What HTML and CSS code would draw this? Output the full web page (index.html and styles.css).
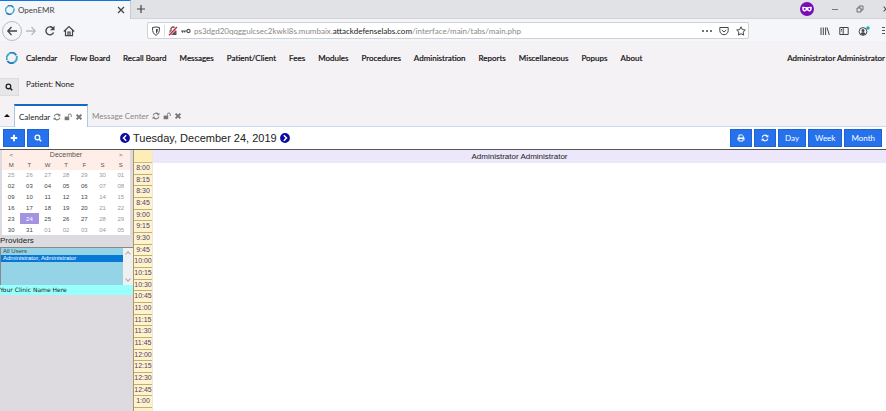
FILE: index.html
```html
<!DOCTYPE html>
<html lang="en">
<head>
<meta charset="utf-8">
<title>OpenEMR</title>
<link rel="stylesheet" href="styles.css">
</head>
<body>
<svg class="defs" aria-hidden="true">
  <symbol id="logo" viewBox="1 .7 10.500 10.500"><g fill="none" stroke-width="1.600"><path d="M2 7.800A4.400 4.400 0 0 1 4 2.100" stroke="#36add2"/><path d="M4 1.800C6 .8 8.500 1.500 10 3.500" stroke="#2784bd"/><path d="M10.300 4.200C11 7 9.500 9 7.800 10" stroke="#36add2"/><path d="M7.800 10C5.500 11 3.500 10.300 2.200 8.600" stroke="#2878b5"/></g></symbol>
  <symbol id="close" viewBox="0 0 10 10"><path d="M2 2l6 6M8 2l-6 6" fill="none" stroke="currentColor" stroke-width="1.300"/></symbol>
  <symbol id="times" viewBox="0 0 10 10"><path d="M2 2l6 6M8 2l-6 6" fill="none" stroke="currentColor" stroke-width="2.500"/></symbol>
  <symbol id="plus" viewBox="0 0 10 10"><path d="M5 1v8M1 5h8" fill="none" stroke="currentColor" stroke-width="1.200"/></symbol>
  <symbol id="plusbold" viewBox="0 0 10 10"><path d="M5 1v8M1 5h8" fill="none" stroke="currentColor" stroke-width="2.400"/></symbol>
  <symbol id="search" viewBox="0 0 10 10"><g fill="none" stroke="currentColor" stroke-width="1.600"><circle cx="4.300" cy="4.300" r="2.900"/><path d="M6.500 6.500L9 9" stroke-width="2"/></g></symbol>
  <symbol id="back" viewBox="0 0 12 12"><path d="M11 6H2M5.500 2L1.800 6l3.700 4" fill="none" stroke="currentColor" stroke-width="1.300"/></symbol>
  <symbol id="reload" viewBox="0 0 12 12"><path d="M9.600 7.500A4 4 0 1 1 8.800 3" fill="none" stroke="currentColor" stroke-width="1.400"/><path d="M10.500.8v4.400H6z" fill="currentColor"/></symbol>
  <symbol id="home" viewBox="0 0 12 12"><path d="M.8 6.500L6 1.500l5.200 5M2.500 5.500v5.200h7V5.500M5 10.500V7h2v3.500" fill="none" stroke="currentColor" stroke-width="1.200"/></symbol>
  <symbol id="shield" viewBox="0 0 10 10"><path d="M1.500 1.500Q5 .5 8.500 1.500C8.600 6 7.500 8 5 9.300C2.500 8 1.400 6 1.500 1.500z" fill="none" stroke="currentColor"/><path d="M5 3v4.500C6.500 6.500 6.800 5 6.800 3z" fill="currentColor"/></symbol>
  <symbol id="insecure" viewBox="0 0 10 10"><path d="M3 5V3a2 2 0 0 1 4 0v2" fill="none" stroke="#555" stroke-width="1.300"/><path d="M1.500 4.500h7V9h-7z" fill="#555"/><path d="M1 9.200L9 1" stroke="#fff" stroke-width="2.600"/><path d="M1 9.200L9 1" stroke="#d92345" stroke-width="1.500"/></symbol>
  <symbol id="key" viewBox="0 0 10 10"><path d="M0 5h6M1.500 5v1.800M3.500 5v1.500" fill="none" stroke="#555" stroke-width="1.200"/><circle cx="7.500" cy="5" r="1.600" fill="none" stroke="#555" stroke-width="1.200"/></symbol>
  <symbol id="pocket" viewBox="0 0 10 10"><path d="M.8 1.500h8.400v3a4.200 4.200 0 0 1-8.400 0zM2.800 4L5 6l2.200-2" fill="none" stroke="currentColor"/></symbol>
  <symbol id="star" viewBox="0 0 10 10"><path d="M5 .8l1.300 2.800 3 .4-2.200 2.100.6 3L5 7.700 2.300 9.100l.6-3L.7 4l3-.4z" fill="none" stroke="currentColor"/></symbol>
  <symbol id="library" viewBox="0 0 10 10"><path d="M1 1.500v7.500M3.300 1.500v7.500M5.600 1.500v7.500M7 1.500l2.300 7.500" fill="none" stroke="currentColor"/></symbol>
  <symbol id="sidebar" viewBox="0 0 10 10"><path d="M.8 1.500h8.400v7H.8zM4.200 1.500v7M2 3.500h1M2 5h1" fill="none" stroke="currentColor"/></symbol>
  <symbol id="account" viewBox="0 0 12 10"><circle cx="5" cy="5.500" r="3.900" fill="none" stroke="currentColor"/><circle cx="5" cy="4.500" r="1.500" fill="currentColor"/><path d="M2.500 8C3 5.800 7 5.800 7.500 8L5 9z" fill="currentColor"/><circle cx="10" cy="2" r="1.700" fill="#10a9ca"/></symbol>
  <symbol id="mask" viewBox="0 0 14 14"><circle cx="7" cy="7" r="7" fill="#7a0cb8"/><path d="M2.300 4.800C4 4.500 5.500 5.300 7 5.300s3-.8 4.700-.5c.3 3.500-.8 4.700-2.300 4.700S7.500 8.300 7 8.300s-.9 1.200-2.400 1.200-2.600-1.200-2.300-4.700z" fill="#fff"/><circle cx="4.700" cy="7" r="1" fill="#7a0cb8"/><circle cx="9.300" cy="7" r="1" fill="#7a0cb8"/></symbol>
  <symbol id="restore" viewBox="0 0 8 8"><path d="M1 3h4v4H1zM3 3V1h4v4H5" fill="none" stroke="currentColor" stroke-width=".8"/></symbol>
  <symbol id="refresh" viewBox="0 0 10 10"><path d="M1.500 4.300A3.500 3.500 0 0 1 7.800 3M8.500 5.700A3.500 3.500 0 0 1 2.200 7" fill="none" stroke="currentColor" stroke-width="1.400"/><path d="M9.200.8v3.400H5.800zM.8 9.200V5.800h3.400z" fill="currentColor"/></symbol>
  <symbol id="unlock" viewBox="0 0 10 10"><path d="M.8 4.500h5.700V9H.8z" fill="currentColor"/><path d="M5.500 4.500V3a1.800 1.800 0 0 1 3.600 0v2" fill="none" stroke="currentColor" stroke-width="1.200"/></symbol>
  <symbol id="print" viewBox="0 0 10 10"><path d="M2.500 5V1.200h4l1.200 1.200V5M2.500 6.500v2.300h5V6.500" fill="none" stroke="currentColor" stroke-width="1.200"/><path d="M.6 4.500h8.800v3.300H8V6.300H2v1.500H.6z" fill="currentColor"/></symbol>
  <symbol id="prev" viewBox="0 0 10 10"><circle cx="5" cy="5" r="4.900" fill="#0b0b9e"/><path d="M6.200 2.300L3.500 5l2.700 2.700" fill="none" stroke="#fff" stroke-width="1.500"/></symbol>
  <symbol id="next" viewBox="0 0 10 10"><circle cx="5" cy="5" r="4.900" fill="#0b0b9e"/><path d="M3.800 2.300L6.500 5 3.800 7.700" fill="none" stroke="#fff" stroke-width="1.500"/></symbol>
</svg>

<header class="browser">
  <div class="titlebar">
    <div class="page-tab"><svg class="i10"><use href="#logo"/></svg><span class="page-title">OpenEMR</span><button aria-label="Close tab"><svg class="i10"><use href="#close"/></svg></button></div>
    <button class="new-tab" aria-label="New tab"><svg class="i10"><use href="#plus"/></svg></button>
    <div class="window-buttons">
      <svg class="i14"><use href="#mask"/></svg>
      <button aria-label="Minimize"><span class="minimize"></span></button>
      <button aria-label="Restore"><svg class="i8"><use href="#restore"/></svg></button>
      <button aria-label="Close"><svg class="i8"><use href="#close"/></svg></button>
    </div>
  </div>
  <div class="navbar">
    <button class="back" aria-label="Back"><svg class="i12"><use href="#back"/></svg></button>
    <button class="forward" aria-label="Forward"><svg class="i12"><use href="#back"/></svg></button>
    <button aria-label="Reload"><svg class="i12"><use href="#reload"/></svg></button>
    <button aria-label="Home"><svg class="i12"><use href="#home"/></svg></button>
    <div class="address">
      <svg class="i10"><use href="#shield"/></svg><span class="divider"></span><svg class="i10"><use href="#insecure"/></svg><svg class="i10"><use href="#key"/></svg>
      <div class="url">ps3dgd20qqggulcsec2kwkl8s.mumbaix.<b>attackdefenselabs.com</b>/interface/main/tabs/main.php</div>
      <button class="dots" aria-label="Page actions"><i></i><i></i><i></i></button>
      <button aria-label="Save to Pocket"><svg class="i10"><use href="#pocket"/></svg></button>
      <button aria-label="Bookmark"><svg class="i10"><use href="#star"/></svg></button>
    </div>
    <div class="tools">
      <button aria-label="Library"><svg class="i10"><use href="#library"/></svg></button>
      <button aria-label="Sidebars"><svg class="i10"><use href="#sidebar"/></svg></button>
      <button aria-label="Account"><svg class="account"><use href="#account"/></svg></button>
      <button class="burger" aria-label="Menu"><i></i><i></i><i></i></button>
    </div>
  </div>
</header>

<nav class="menu">
  <svg class="i12 brand"><use href="#logo"/></svg>
  <a href="#">Calendar</a><a href="#">Flow Board</a><a href="#">Recall Board</a><a href="#">Messages</a><a href="#">Patient/Client</a><a href="#">Fees</a><a href="#">Modules</a><a href="#">Procedures</a><a href="#">Administration</a><a href="#">Reports</a><a href="#">Miscellaneous</a><a href="#">Popups</a><a href="#">About</a>
  <a href="#" class="user">Administrator Administrator</a>
</nav>

<section class="patient">
  <button class="find" aria-label="Find patient"><svg class="i8"><use href="#search"/></svg></button>
  <span>Patient: None</span>
</section>

<div class="tabs">
  <button class="collapse" aria-label="Collapse"><span class="caret"></span></button>
  <div class="tab active"><a href="#">Calendar</a><button aria-label="Refresh"><svg class="i8"><use href="#refresh"/></svg></button><button aria-label="Lock"><svg class="i8"><use href="#unlock"/></svg></button><button aria-label="Close"><svg class="i8"><use href="#times"/></svg></button></div>
  <div class="tab"><a href="#">Message Center</a><button aria-label="Refresh"><svg class="i8"><use href="#refresh"/></svg></button><button aria-label="Lock"><svg class="i8"><use href="#unlock"/></svg></button><button aria-label="Close"><svg class="i8"><use href="#times"/></svg></button></div>
</div>

<div class="toolbar">
  <div class="group left">
    <button class="btn" aria-label="Add"><svg class="i8"><use href="#plusbold"/></svg></button>
    <button class="btn" aria-label="Search"><svg class="i8"><use href="#search"/></svg></button>
  </div>
  <div class="date">
    <button aria-label="Previous day"><svg class="i10"><use href="#prev"/></svg></button>
    <h1>Tuesday, December 24, 2019</h1>
    <button aria-label="Next day"><svg class="i10"><use href="#next"/></svg></button>
  </div>
  <div class="group right">
    <button class="btn" aria-label="Print"><svg class="i8"><use href="#print"/></svg></button>
    <button class="btn" aria-label="Refresh"><svg class="i8"><use href="#refresh"/></svg></button>
    <button class="btn">Day</button><button class="btn">Week</button><button class="btn">Month</button>
  </div>
</div>

<main class="content">
  <aside class="side">
    <table class="month">
      <thead>
        <tr><th><a href="#">&lt;</a></th><th colspan="5" class="name">December</th><th><a href="#">&gt;</a></th></tr>
        <tr><th>M</th><th>T</th><th>W</th><th>T</th><th>F</th><th>S</th><th>S</th></tr>
      </thead>
      <tbody>
        <tr class="out"><td>25</td><td>26</td><td>27</td><td>28</td><td>29</td><td>30</td><td>01</td></tr>
        <tr><td>02</td><td>03</td><td>04</td><td>05</td><td>06</td><td>07</td><td>08</td></tr>
        <tr><td>09</td><td>10</td><td>11</td><td>12</td><td>13</td><td>14</td><td>15</td></tr>
        <tr><td>16</td><td>17</td><td>18</td><td>19</td><td>20</td><td>21</td><td>22</td></tr>
        <tr><td>23</td><td class="today">24</td><td>25</td><td>26</td><td>27</td><td>28</td><td>29</td></tr>
        <tr><td>30</td><td>31</td><td class="off">01</td><td class="off">02</td><td class="off">03</td><td>04</td><td>05</td></tr>
      </tbody>
    </table>
    <label for="providers">Providers</label>
    <div class="picker">
      <select id="providers" size="5"><option>All Users</option><option class="chosen">Administrator, Administrator</option></select>
      <div class="scroll"><span></span><span></span></div>
    </div>
    <div class="clinic">Your Clinic Name Here</div>
  </aside>
  <div class="times">
    <div class="times-head"></div>
    <ol><li>8:00</li><li>8:15</li><li>8:30</li><li>8:45</li><li>9:00</li><li>9:15</li><li>9:30</li><li>9:45</li><li>10:00</li><li>10:15</li><li>10:30</li><li>10:45</li><li>11:00</li><li>11:15</li><li>11:30</li><li>11:45</li><li>12:00</li><li>12:15</li><li>12:30</li><li>12:45</li><li>1:00</li></ol>
  </div>
  <section class="schedule"><h2>Administrator Administrator</h2></section>
</main>
</body>
</html>
```
FILE: styles.css
```css
* { box-sizing: border-box; }
body { margin: 0; min-height: 100vh; display: flex; flex-direction: column; overflow: hidden; background: #f4f2f4; color: #222; font: 8px/12px Lato, sans-serif; }
button { display: inline-flex; align-items: center; justify-content: center; margin: 0; padding: 0; border: 0; background: none; color: inherit; font: inherit; }
a { color: inherit; text-decoration: none; }
svg { display: block; flex: none; }
.defs { position: absolute; width: 0; height: 0; }
.i8 { width: 8px; height: 8px; }
.i10 { width: 10px; height: 10px; }
.i12 { width: 12px; height: 12px; }
.i14 { width: 14px; height: 14px; }

.titlebar { display: flex; align-items: center; height: 19px; background: #e1e2e6; border-bottom: 1px solid #d2d3d8; }
.page-tab { display: flex; align-items: center; gap: 3px; width: 131px; height: 19px; padding: 0 4px 0 5px; border-top: 1px solid #1473e6; border-right: 1px solid #c9cacf; background: #f5f6f9; color: #444; }
.page-title { flex: 1; }
.new-tab { margin-left: 5px; color: #444; }
.window-buttons { display: flex; align-items: center; gap: 18px; margin: 0 -4px 0 auto; color: #555; }
.minimize { width: 6px; height: 1px; background: #777; }
.navbar { display: flex; align-items: center; height: 24px; padding: 0 2px; gap: 7px; background: #f5f6f9; border-bottom: 1px solid #eeeff2; color: #444; }
.back { width: 20px; height: 20px; border: 1px solid #bbb; border-radius: 50%; }
.forward { transform: scaleX(-1); color: #bbb; margin-left: -4px; }
.address { display: flex; align-items: center; flex: 0 1 602px; height: 17px; margin-left: 65px; padding: 0 2px 0 3px; gap: 3px; background: #fff; border: 1px solid #cfd0d5; border-radius: 2px; }
.divider { width: 1px; height: 12px; background: #ddd; }
.url { flex: 1; white-space: nowrap; overflow: hidden; color: #888; }
.url b { font-weight: 400; color: #222; }
.address button + button { margin-left: 4px; }
.dots { gap: 2px; }
.dots i { width: 2px; height: 2px; border-radius: 50%; background: #444; }
.tools { display: flex; align-items: center; gap: 9px; margin: 0 -1px 0 auto; }
.account { width: 12px; height: 10px; }
.burger { flex-direction: column; gap: 2px; width: 6px; padding-left: 3px; }
.burger i { width: 3px; height: 1px; background: #555; }

.menu { display: flex; align-items: center; height: 30px; padding: 0 1px 0 6px; gap: 13px; color: #111; white-space: nowrap; -webkit-text-stroke: .2px #111; }
.brand { margin-right: -5px; }
.menu .user { margin-left: auto; }
.patient { display: flex; gap: 7px; height: 31px; padding-top: 5px; }
.find { width: 19px; height: 18px; border: 1px solid #ddd; border-left: 0; background: #e7e6e8; }
.tabs { display: flex; align-items: stretch; height: 23px; border-bottom: 1px solid #cbdcef; color: #888; }
.collapse { width: 14px; }
.caret { border: 3px solid transparent; border-top: 0; border-bottom-color: #111; }
.tab { display: flex; align-items: center; gap: 3px; padding: 2px 4px 0; white-space: nowrap; }
.tab.active { width: 74px; margin-bottom: -1px; border: 1px solid #a9c8e6; border-top: 2px solid #1769c0; border-bottom: 0; padding-top: 0; background: #fff; }
.tab.active a { color: #222; }
.tab button { color: #777; }

.toolbar { display: flex; align-items: center; height: 23px; padding: 0 4px 0 3px; background: #fff; border-bottom: 1px solid #555; }
.group { display: flex; gap: 2px; }
.right { margin-left: auto; }
.btn { min-width: 21px; height: 18px; padding: 0 6px; background: #2672ec; border: 1px solid #1c63d5; color: #fff; }
.date { display: flex; align-items: center; gap: 3px; margin-left: 71px; }
.date h1 { margin: 0; font: 11px/16px "Liberation Sans", sans-serif; color: #222; }

.content { display: flex; flex: 1; background: #fff; font-family: "Liberation Sans", sans-serif; }
.side { width: 133px; background: #dddbdf; }
.month { width: 128px; height: 85px; margin-left: 2px; table-layout: fixed; border-collapse: collapse; background: #fff; font-size: 6px; line-height: 8px; text-align: center; color: #444; }
.month thead { background: #feeee7; color: #555; }
.month thead tr { height: 10px; }
.month th, .month td { padding: 0; font-weight: 400; }
.month .name { font-size: 7px; }
.month .out, .month .off, .month td:nth-child(n+6) { color: #999; }
.month .today { background: #a493e0; color: #fff; }
.side label { display: block; line-height: 12px; }
.picker { display: flex; height: 38px; border: 1px solid #888; border-width: 1px 0 0 1px; background: #95d3e7; }
.picker select { flex: 1; min-width: 0; height: 37px; padding: 0; border: 0; overflow: hidden; background: #95d3e7; color: #444; font: 6px/8px "Liberation Sans", sans-serif; }
.picker option { height: 7px; min-height: 0; padding: 0 2px; line-height: 7px; }
.picker .chosen { background: #0878d7; color: #fff; }
.scroll { display: flex; flex-direction: column; justify-content: space-between; align-items: center; width: 10px; padding: 4px 0; background: #f0f0f0; }
.scroll span { width: 4px; height: 4px; border: solid #aaa; border-width: 1px 0 0 1px; transform: rotate(45deg); }
.scroll span:last-child { transform: rotate(225deg); }
.clinic { background: #98fffc; font: 6px/10px "DejaVu Sans", sans-serif; }
.times { display: flex; flex-direction: column; width: 20px; padding-bottom: 3px; background: #fff3cd; border-left: 1px solid #a9966c; border-right: 1px solid #eee8d8; }
.times-head { height: 13px; border-bottom: 1px solid #c9b985; background: #ffedb7; }
.times ol { flex: 1; display: grid; grid-auto-rows: 1fr; margin: 0; padding: 0; list-style: none; font-size: 7px; line-height: 10px; text-align: center; color: #51406b; }
.times li { border-bottom: 1px solid #c2ae72; }
.schedule { flex: 1; }
.schedule h2 { margin: 0; background: #ede7fb; font-size: 8px; line-height: 13px; font-weight: 400; text-align: center; }
```
